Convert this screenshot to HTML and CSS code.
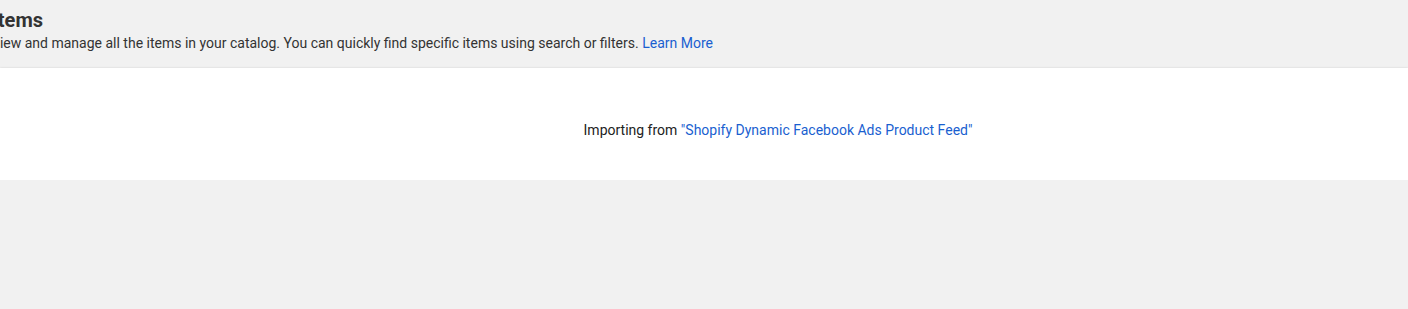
FILE: index.html
```html
<!DOCTYPE html>
<html lang="en">
<head>
    <meta charset="UTF-8">
    <title>Items</title>
    <link rel="stylesheet" href="styles.css">
</head>
<body>
    <div class="page-header">
        <h1>Items</h1>
        <p>View and manage all the items in your catalog. You can quickly find specific items using search or filters. <a href="#">Learn More</a></p>
    </div>
    <div class="card">
        <div class="import-status">
            Importing from <a href="#">"Shopify Dynamic Facebook Ads Product Feed"</a>
        </div>
    </div>
</body>
</html>
```

FILE: styles.css
```css
body {
    margin: 0;
    background: #f1f1f1;
    font-family: Roboto, Arial, sans-serif;
    color: #333;
}
a {
    color: #1a5fd0;
    text-decoration: none;
}
.page-header {
    margin-left: -7px;
    padding-top: 8px;
    height: 58px;
    box-sizing: border-box;
}
.page-header h1 {
    margin: 0 0 0 -1px;
    font-size: 20px;
    font-weight: 700;
    line-height: 24px;
}
.page-header p {
    margin: 1px 0 0 -2px;
    font-size: 14px;
    line-height: 20px;
}
.card {
    margin-top: 10px;
    height: 112px;
    background: white;
    box-shadow: 0 1px 3px rgba(0,0,0,0.12), 0 0 2px rgba(0,0,0,0.08);
    display: flex;
    align-items: center;
    justify-content: center;
    padding-left: 148px;
    padding-top: 12px;
    box-sizing: border-box;
}
.import-status {
    font-size: 14px;
    color: #222;
}
```
